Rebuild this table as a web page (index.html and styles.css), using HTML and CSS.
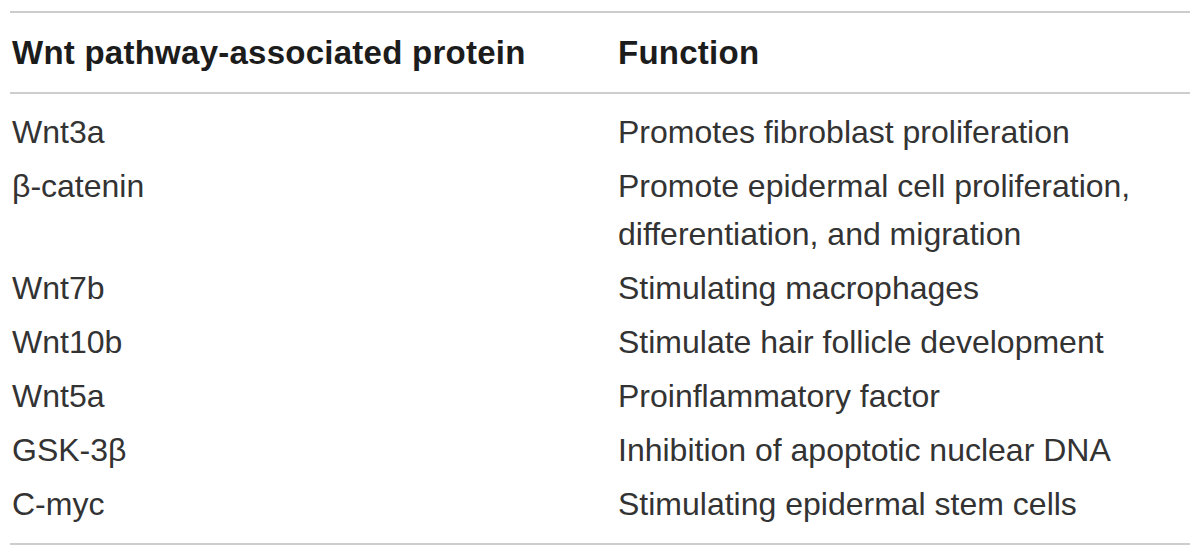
FILE: index.html
```html
<!DOCTYPE html>
<html lang="en">
<head>
<meta charset="utf-8">
<title>Wnt pathway-associated proteins</title>
<link rel="stylesheet" href="styles.css">
</head>
<body>
<div class="page">
<table class="wnt-table">
  <thead>
    <tr>
      <th class="col-protein">Wnt pathway-associated protein</th>
      <th class="col-function">Function</th>
    </tr>
  </thead>
  <tbody>
    <tr><td>Wnt3a</td><td>Promotes fibroblast proliferation</td></tr>
    <tr><td>β-catenin</td><td>Promote epidermal cell proliferation, differentiation, and migration</td></tr>
    <tr><td>Wnt7b</td><td>Stimulating macrophages</td></tr>
    <tr><td>Wnt10b</td><td>Stimulate hair follicle development</td></tr>
    <tr><td>Wnt5a</td><td>Proinflammatory factor</td></tr>
    <tr><td>GSK-3β</td><td>Inhibition of apoptotic nuclear DNA</td></tr>
    <tr><td>C-myc</td><td>Stimulating epidermal stem cells</td></tr>
  </tbody>
</table>
</div>
</body>
</html>
```

FILE: styles.css
```css
html, body {
  margin: 0;
  padding: 0;
  background: #ffffff;
}

.page {
  padding: 11px 10px 0 10px;
}

.wnt-table {
  width: 1180px;
  border-collapse: collapse;
  font-family: "Liberation Sans", Arial, Helvetica, sans-serif;
  color: #333333;
}

.wnt-table th {
  text-align: left;
  font-weight: 700;
  font-size: 33px;
  line-height: 53px;
  letter-spacing: 0.25px;
  color: #1c1c1c;
  padding: 13px 0 13px 2px;
  border-top: 2px solid #cdcdcd;
  border-bottom: 2px solid #cdcdcd;
  vertical-align: top;
}

.wnt-table .col-protein {
  width: 604px;
}

.wnt-table td {
  font-size: 32px;
  line-height: 48px;
  padding: 3px 0 3px 2px;
  vertical-align: top;
  font-weight: 400;
}

.wnt-table tbody tr:first-child td {
  padding-top: 14px;
}

.wnt-table tbody tr:last-child td {
  padding-bottom: 15px;
  border-bottom: 2px solid #cdcdcd;
}
```
